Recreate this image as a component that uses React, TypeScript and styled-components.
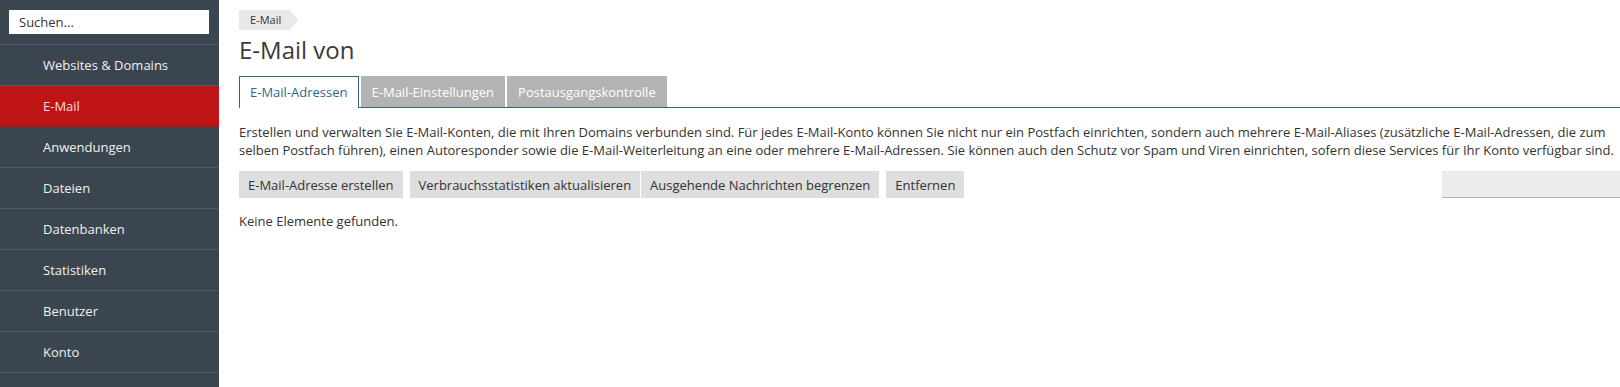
import styled, { createGlobalStyle } from "styled-components"

const GlobalStyle = createGlobalStyle`
    html, body {
        margin: 0;
        padding: 0;
        background: #fff;
    }

    body {
        font-family: "Open Sans", "Liberation Sans", sans-serif;
        font-size: 13px;
        color: #333;
    }
`

const Page = styled.div`
    display: flex;
    min-height: 100vh;
`

const Sidebar = styled.nav`
    width: 219px;
    flex-shrink: 0;
    background: #3b4550;
`

const SearchWrap = styled.div`
    padding: 10px 10px 10px 9px;
    border-bottom: 1px solid #4f5a65;
`

const SearchInput = styled.input`
    box-sizing: border-box;
    display: block;
    width: 200px;
    height: 24px;
    border: none;
    outline: none;
    padding: 0 10px;
    font-family: inherit;
    font-size: 13px;
    color: #333;
    background: #fff;

    &::placeholder {
        color: #333;
    }
`

const NavItem = styled.div<{ $active?: boolean }>`
    height: 40px;
    line-height: 41px;
    padding-left: 43px;
    border-bottom: 1px solid ${(p) => (p.$active ? "#b01417" : "#4f5a65")};
    background: ${(p) => (p.$active ? "#bf1416" : "transparent")};
    color: ${(p) => (p.$active ? "#f6dede" : "#f0f0f0")};
    font-size: 13px;
    cursor: pointer;
`

const Main = styled.main`
    flex: 1;
    min-width: 0;
    padding: 10px 0 0 20px;
`

const Breadcrumb = styled.div`
    position: relative;
    display: inline-block;
    height: 20px;
    line-height: 20px;
    padding: 0 9px 0 11px;
    background: #e8e8e8;
    font-size: 11px;
    color: #333;

    &::after {
        content: "";
        position: absolute;
        right: -8px;
        top: 0;
        border-top: 10px solid transparent;
        border-bottom: 10px solid transparent;
        border-left: 8px solid #e8e8e8;
    }
`

const Heading = styled.h1`
    margin: 4px 0 10px;
    font-size: 24px;
    line-height: 32px;
    font-weight: 400;
    color: #3a3a3a;
`

const TabBar = styled.div`
    display: flex;
    gap: 2px;
    height: 31px;
    border-bottom: 1px solid #336578;
`

const Tab = styled.div<{ $active?: boolean }>`
    box-sizing: border-box;
    height: ${(p) => (p.$active ? "32px" : "31px")};
    padding: 0 10px;
    line-height: 30px;
    font-size: 13px;
    cursor: pointer;
    background: ${(p) => (p.$active ? "#fff" : "#b3b3b3")};
    color: ${(p) => (p.$active ? "#2d6a88" : "#fff")};
    border: 1px solid ${(p) => (p.$active ? "#336578" : "#b3b3b3")};
    border-bottom: ${(p) => (p.$active ? "none" : "1px solid #b3b3b3")};
`

const Description = styled.p`
    margin: 15px 0 0;
    line-height: 18px;
    padding-right: 2px;
`

const Toolbar = styled.div`
    display: flex;
    align-items: center;
    margin-top: 12px;
`

const ButtonGroup = styled.div`
    display: flex;
    gap: 1px;
    margin-right: 7px;
`

const Button = styled.button`
    height: 27px;
    padding: 0 9px;
    border: none;
    background: #dedede;
    font-family: inherit;
    font-size: 13px;
    color: #333;
    cursor: pointer;
`

const ListSearch = styled.div`
    margin-left: auto;
    width: 178px;
    height: 27px;
    background: #ebebeb;
    border-bottom: 1px solid #b4b4b4;
    box-sizing: border-box;
`

const Empty = styled.div`
    margin-top: 14px;
    line-height: 18px;
`

const navItems = ["Websites & Domains", "E-Mail", "Anwendungen", "Dateien", "Datenbanken", "Statistiken", "Benutzer", "Konto"]

export const App = () => {
    return (
        <Page>
            <GlobalStyle />
            <Sidebar>
                <SearchWrap>
                    <SearchInput placeholder="Suchen..." />
                </SearchWrap>
                {navItems.map((item) => (
                    <NavItem key={item} $active={item === "E-Mail"}>
                        {item}
                    </NavItem>
                ))}
            </Sidebar>

            <Main>
                <Breadcrumb>E-Mail</Breadcrumb>
                <Heading>E-Mail von</Heading>

                <TabBar>
                    <Tab $active>E-Mail-Adressen</Tab>
                    <Tab>E-Mail-Einstellungen</Tab>
                    <Tab>Postausgangskontrolle</Tab>
                </TabBar>

                <Description>
                    Erstellen und verwalten Sie E-Mail-Konten, die mit Ihren Domains verbunden sind. Für jedes E-Mail-Konto können Sie nicht nur ein Postfach einrichten, sondern auch mehrere E-Mail-Aliases (zusätzliche E-Mail-Adressen, die zum selben Postfach führen), einen Autoresponder sowie die E-Mail-Weiterleitung an eine oder mehrere E-Mail-Adressen. Sie können auch den Schutz vor Spam und Viren einrichten, sofern diese Services für Ihr Konto verfügbar sind.
                </Description>

                <Toolbar>
                    <ButtonGroup>
                        <Button>E-Mail-Adresse erstellen</Button>
                    </ButtonGroup>
                    <ButtonGroup>
                        <Button>Verbrauchsstatistiken aktualisieren</Button>
                        <Button>Ausgehende Nachrichten begrenzen</Button>
                    </ButtonGroup>
                    <ButtonGroup>
                        <Button>Entfernen</Button>
                    </ButtonGroup>
                    <ListSearch />
                </Toolbar>

                <Empty>Keine Elemente gefunden.</Empty>
            </Main>
        </Page>
    )
}

export default App
